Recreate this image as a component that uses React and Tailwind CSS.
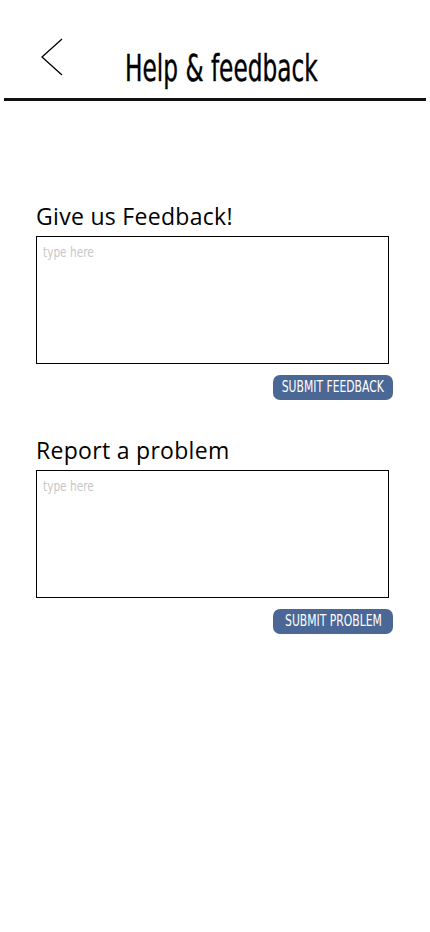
const condensed = {
  fontFamily: '"DejaVu Sans Condensed", "DejaVu Sans", sans-serif',
}

// narrow text: squeeze horizontally around its centre or left edge
function Narrow({ children, className = '' }) {
  return (
    <span className={`inline-block whitespace-nowrap ${className}`} style={condensed}>
      {children}
    </span>
  )
}

function FeedbackBox({ title, action }) {
  return (
    <section className="flex flex-col">
      <h2 className="text-[23px] leading-[30px] text-black font-['Open_Sans',sans-serif] tracking-[0.3px]">
        {title}
      </h2>
      <div className="mt-[5px] h-[128px] w-[353px] border border-black px-[6px] pt-[2px]">
        <Narrow className="origin-left scale-x-[0.84] text-[14px] text-[#c8c8c8]">type here</Narrow>
      </div>
      <div className="mt-[11px] flex justify-end pr-[37px]">
        <button className="flex h-[25px] w-[120px] items-center justify-center overflow-visible rounded-[7px] bg-[#4a6795] text-white">
          <Narrow className="origin-center scale-x-[0.8] text-[15px] leading-[25px]">{action}</Narrow>
        </button>
      </div>
    </section>
  )
}

export default function App() {
  return (
    <div className="min-h-[932px] w-[430px] bg-white">
      <header className="relative h-[102px]">
        <svg
          className="absolute left-[40px] top-[38px]"
          width="24"
          height="40"
          viewBox="0 0 24 40"
          fill="none"
          stroke="#000"
          strokeWidth="1.3"
        >
          <path d="M22 1 L2 19 L22 37" />
        </svg>
        <h1
          className="absolute left-[125px] top-[46px] origin-left scale-x-[0.68] whitespace-nowrap text-[38px] leading-[44px] text-black [-webkit-text-stroke:0.4px_black]"
          style={condensed}
        >
          Help &amp; feedback
        </h1>
        <div className="absolute bottom-[1px] left-[4px] right-[4px] h-[3px] bg-[#111]" />
      </header>

      <main className="flex flex-col gap-[35px] pl-[36px] pt-[99px]">
        <FeedbackBox title="Give us Feedback!" action="SUBMIT FEEDBACK" />
        <FeedbackBox title="Report a problem" action="SUBMIT PROBLEM" />
      </main>
    </div>
  )
}
